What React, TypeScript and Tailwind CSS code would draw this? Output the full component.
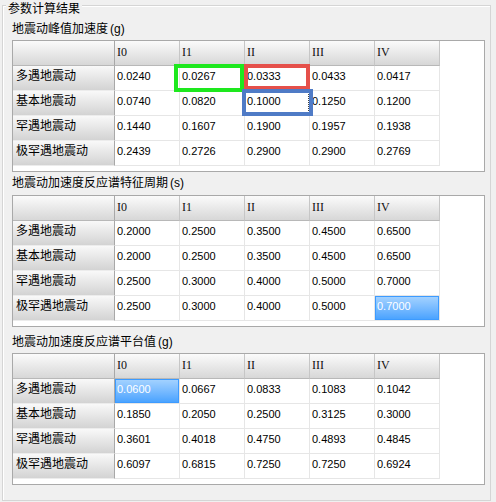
import React from "react";

type Row = { label: string; values: string[] };

const COLS = ["I0", "I1", "II", "III", "IV"];

const T1: Row[] = [
  { label: "多遇地震动", values: ["0.0240", "0.0267", "0.0333", "0.0433", "0.0417"] },
  { label: "基本地震动", values: ["0.0740", "0.0820", "0.1000", "0.1250", "0.1200"] },
  { label: "罕遇地震动", values: ["0.1440", "0.1607", "0.1900", "0.1957", "0.1938"] },
  { label: "极罕遇地震动", values: ["0.2439", "0.2726", "0.2900", "0.2900", "0.2769"] },
];
const T2: Row[] = [
  { label: "多遇地震动", values: ["0.2000", "0.2500", "0.3500", "0.4500", "0.6500"] },
  { label: "基本地震动", values: ["0.2000", "0.2500", "0.3500", "0.4500", "0.6500"] },
  { label: "罕遇地震动", values: ["0.2500", "0.3000", "0.4000", "0.5000", "0.7000"] },
  { label: "极罕遇地震动", values: ["0.2500", "0.3000", "0.4000", "0.5000", "0.7000"] },
];
const T3: Row[] = [
  { label: "多遇地震动", values: ["0.0600", "0.0667", "0.0833", "0.1083", "0.1042"] },
  { label: "基本地震动", values: ["0.1850", "0.2050", "0.2500", "0.3125", "0.3000"] },
  { label: "罕遇地震动", values: ["0.3601", "0.4018", "0.4750", "0.4893", "0.4845"] },
  { label: "极罕遇地震动", values: ["0.6097", "0.6815", "0.7250", "0.7250", "0.6924"] },
];

const CJK = "font-['Noto_Sans_CJK_SC',sans-serif]";
const NUM = "font-['Liberation_Sans',Arial,sans-serif]";

function DataTable({
  rows,
  selected,
  focus,
}: {
  rows: Row[];
  selected?: [number, number];
  focus?: [number, number];
}) {
  return (
    <div className="w-[473px] h-[132px] border border-[#a9a9a9] bg-white">
      <div className="grid grid-cols-[102px_65px_65px_65px_65px_65px] w-[427px]">
        <div className="h-[25px] bg-linear-to-b from-[#fbfbfb] to-[#d7d7d7] border-r border-b border-r-[#a8a8a8] border-b-[#b8b8b8]" />
        {COLS.map((c) => (
          <div
            key={c}
            className="h-[25px] bg-linear-to-b from-[#fbfbfb] to-[#d7d7d7] border-r border-b border-r-[#c6c6c6] border-b-[#b8b8b8] pl-[2px] pt-[4px] text-[12px] leading-[14px] font-normal text-[#111] font-['Liberation_Serif',serif]"
          >
            {c}
          </div>
        ))}
        {rows.map((r, ri) => (
          <React.Fragment key={r.label}>
            <div
              className={`h-[25px] bg-linear-to-b from-[#f9f9f9] to-[#d3d3d3] border-r border-b border-r-[#a8a8a8] border-b-[#ececec] pl-[3px] pt-[1px] text-[12px] leading-[16px] text-black ${CJK}`}
            >
              {r.label}
            </div>
            {r.values.map((v, ci) => {
              const isSel = selected && selected[0] === ri && selected[1] === ci;
              const isFocus = focus && focus[0] === ri && focus[1] === ci;
              return (
                <div
                  key={ci}
                  className="relative h-[25px] border-r border-b border-[#e6e6e6] bg-white"
                >
                  {isSel ? (
                    <div
                      className={`h-full w-full border border-[#3d9bff] bg-linear-to-b from-[#a2d1ff] to-[#4aa3ff] pl-[1px] pt-[2px] text-[11px] leading-[14px] text-white ${NUM}`}
                    >
                      {v}
                    </div>
                  ) : (
                    <div className={`pl-[2px] pt-[3px] text-[11px] leading-[14px] text-black ${NUM}`}>{v}</div>
                  )}
                  {isFocus && (
                    <div className="absolute inset-0 border border-dotted border-[#404040]" />
                  )}
                </div>
              );
            })}
          </React.Fragment>
        ))}
      </div>
    </div>
  );
}

function Heading({ text, unit }: { text: string; unit: string }) {
  return (
    <div className={`h-[16px] text-[12px] leading-[16px] text-black whitespace-nowrap ${CJK}`}>
      {text}
      <span className={`${NUM} ml-[2px]`}>({unit})</span>
    </div>
  );
}

export default function App() {
  return (
    <div className="relative w-[496px] h-[502px] overflow-hidden bg-[#f0f0f0] pt-[5px] pl-[2px]">
      <div className="relative w-[489px] h-[496px] border border-[#d5d5d5] shadow-[inset_1px_1px_0_#ffffff]">
        <div
          className={`absolute left-[3px] top-[-6px] px-[2px] bg-[#f0f0f0] text-[12px] leading-[16px] text-black ${CJK}`}
        >
          参数计算结果
        </div>
        <div className="flex flex-col pl-[9px]">
          <div className="mt-[14px]">
            <Heading text="地震动峰值加速度" unit="g" />
          </div>
          <div className="mt-[4px]">
            <DataTable rows={T1} focus={[1, 2]} />
          </div>
          <div className="mt-[2px]">
            <Heading text="地震动加速度反应谱特征周期" unit="s" />
          </div>
          <div className="mt-[5px]">
            <DataTable rows={T2} selected={[3, 4]} />
          </div>
          <div className="mt-[6px]">
            <Heading text="地震动加速度反应谱平台值" unit="g" />
          </div>
          <div className="mt-[4px]">
            <DataTable rows={T3} selected={[0, 0]} />
          </div>
        </div>
      </div>

      {/* annotation rectangles over table 1 */}
      <div className="absolute left-[174px] top-[64px] w-[70px] h-[28px] border-[4px] border-[#1ee81e]" />
      <div className="absolute left-[244px] top-[64px] w-[66px] h-[26px] border-[4px] border-[#e5504a]" />
      <div className="absolute left-[242px] top-[89px] w-[71px] h-[27px] border-[4px] border-[#4f7bc6]" />
    </div>
  );
}
